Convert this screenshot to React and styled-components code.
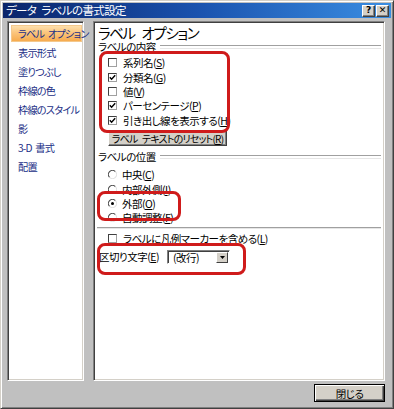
import React from "react";
import styled, { createGlobalStyle } from "styled-components";

const Global = createGlobalStyle`
  html, body { margin: 0; padding: 0; background: #c0c0c0; }
  body {
    font-family: "Noto Sans CJK JP", "Noto Sans", sans-serif;
    font-feature-settings: "palt";
  }
  * { box-sizing: border-box; }
`;

const Window = styled.div`
  width: 394px;
  height: 409px;
  background: #c0c0c0;
  border: 1px solid;
  border-color: #d4d0c8 #404040 #404040 #d4d0c8;
  box-shadow: inset 1px 1px 0 #fff, inset -1px -1px 0 #808080;
  padding: 2px;
  display: flex;
  flex-direction: column;
`;

const TitleBar = styled.div`
  height: 15px;
  display: flex;
  align-items: center;
  gap: 1px;
  padding: 0 2px 0 3px;
  background: linear-gradient(90deg, #0a246a 0%, #1a52ae 50%, #3a8ee2 100%);
`;

const Title = styled.div`
  flex: 1;
  color: #fff;
  font-size: 11.5px;
  line-height: 15px;
  white-space: nowrap;
  letter-spacing: -0.6px;
  word-spacing: 3px;
`;

const TitleButton = styled.div`
  width: 13px;
  height: 12px;
  background: #d4d0c8;
  border: 1px solid;
  border-color: #fff #404040 #404040 #fff;
  box-shadow: inset -1px -1px 0 #808080;
  display: flex;
  align-items: center;
  justify-content: center;
  font-family: "DejaVu Sans", sans-serif;
  font-weight: bold;
  font-size: 9px;
  line-height: 1;
  color: #000;
`;

const Body = styled.div`
  flex: 1;
  display: flex;
  flex-direction: column;
  padding: 3px 6px 4px 4px;
`;

const Panels = styled.div`
  height: 360px;
  display: flex;
  gap: 9px;
`;

const Sunken = styled.div`
  background: #fff;
  border: 1px solid;
  border-color: #808080 #ffffff #ffffff #808080;
  box-shadow: inset 1px 1px 0 #404040, inset -1px -1px 0 #d4d0c8;
`;

const NavList = styled(Sunken)`
  width: 77px;
  flex: none;
  padding: 3px 1px 0 3px;
  display: flex;
  flex-direction: column;
  gap: 2px;
`;

const NavItem = styled.div`
  height: 17px;
  line-height: 17px;
  padding-left: 7px;
  font-size: 10.2px;
  color: #1b2f86;
  white-space: nowrap;
  letter-spacing: -0.8px;
  word-spacing: 2px;
  background: ${(p) =>
    p.$active
      ? "linear-gradient(180deg, #fde3b4 0%, #fbc57c 45%, #f6a849 100%)"
      : "transparent"};
  box-shadow: ${(p) => (p.$active ? "inset 0 0 0 1px #f4c88c" : "none")};
`;

const Content = styled(Sunken)`
  flex: 1;
  position: relative;
  padding: 4px 3px 0 4px;
  display: flex;
  flex-direction: column;
  color: #000;
  font-size: 10.5px;
  letter-spacing: -0.5px;
`;

const Heading = styled.div`
  font-size: 14.5px;
  line-height: 14px;
  height: 14px;
  letter-spacing: -1.4px;
  word-spacing: 5px;
  white-space: nowrap;
`;

const GroupHeader = styled.div`
  display: flex;
  align-items: center;
  gap: 4px;
  height: 12px;
  line-height: 12px;
  margin-top: ${(p) => p.$mt || 0}px;
  white-space: nowrap;
  &::after {
    content: "";
    flex: 1;
    height: 2px;
    border-top: 1px solid #a0a0a0;
    border-bottom: 1px solid #e6e6e6;
  }
`;

const OptionList = styled.div`
  display: flex;
  flex-direction: column;
  margin-top: ${(p) => p.$mt || 0}px;
  padding-left: ${(p) => p.$pl || 10}px;
`;

const OptionRow = styled.div`
  height: ${(p) => p.$h || 14.4}px;
  display: flex;
  align-items: center;
  gap: ${(p) => p.$gap || 6}px;
  white-space: nowrap;
`;

const Box = styled.span`
  width: 9px;
  height: 9px;
  flex: none;
  border: 1px solid;
  border-color: #404040 #a0a0a0 #a0a0a0 #404040;
  background: #fff;
  display: flex;
  align-items: center;
  justify-content: center;
`;

const U = styled.span`
  text-decoration: underline;
  text-underline-offset: 1px;
`;

const Check = ({ checked }) => (
  <Box>
    {checked && (
      <svg width="7" height="7" viewBox="0 0 7 7">
        <path d="M0.8 3.2 L2.6 5.2 L6.2 1.2" fill="none" stroke="#000" strokeWidth="1.4" />
      </svg>
    )}
  </Box>
);

const RadioMark = ({ checked }) => (
  <svg width="9" height="9" viewBox="0 0 9 9" style={{ flex: "none" }}>
    <path d="M1.6 7.4 A4 4 0 0 1 7.4 1.6" fill="none" stroke="#4a4a4a" strokeWidth="1.1" />
    <path d="M7.4 1.6 A4 4 0 0 1 1.6 7.4" fill="none" stroke="#e2e2e2" strokeWidth="1.1" />
    {checked && <circle cx="4.5" cy="4.5" r="1.5" fill="#000" />}
  </svg>
);

const PushButton = styled.div`
  height: 16px;
  width: 119px;
  margin: 3px 0 0 10px;
  background: #d4d0c8;
  border: 1px solid;
  border-color: #fff #404040 #404040 #fff;
  box-shadow: inset -1px -1px 0 #808080;
  display: flex;
  align-items: center;
  justify-content: center;
  white-space: nowrap;
  font-size: 10px;
  letter-spacing: -0.8px;
  word-spacing: 3px;
`;

const Separator = styled.div`
  height: 2px;
  margin: 2px 0 0 -1px;
  border-top: 1px solid #a0a0a0;
  border-bottom: 1px solid #e6e6e6;
`;

const FieldRow = styled.div`
  height: 14px;
  margin-top: 3.8px;
  padding-left: 1px;
  display: flex;
  align-items: center;
  white-space: nowrap;
`;

const FieldLabel = styled.span`
  width: 68px;
  flex: none;
`;

const Select = styled.div`
  width: 63px;
  height: 14px;
  display: flex;
  align-items: center;
  border: 1px solid;
  border-color: #808080 #fff #fff #808080;
  box-shadow: inset 1px 1px 0 #404040;
  background: #fff;
  padding: 1px 1px 0 5px;
`;

const SelectText = styled.span`
  flex: 1;
  line-height: 11px;
`;

const ArrowButton = styled.span`
  width: 12px;
  height: 11px;
  background: #d4d0c8;
  border: 1px solid;
  border-color: #fff #404040 #404040 #fff;
  display: flex;
  align-items: center;
  justify-content: center;
`;

const Highlight = styled.div`
  position: absolute;
  left: ${(p) => p.$x}px;
  top: ${(p) => p.$y}px;
  width: ${(p) => p.$w}px;
  height: ${(p) => p.$h}px;
  border: 3px solid #cf1b1b;
  border-radius: 8px;
  pointer-events: none;
`;

const Footer = styled.div`
  margin-top: 3px;
  display: flex;
  justify-content: flex-end;
`;

const CloseButton = styled.div`
  width: 71px;
  height: 18px;
  border: 1px solid #000;
  background: #d4d0c8;
  box-shadow: inset 1px 1px 0 #fff, inset -1px -1px 0 #404040, inset -2px -2px 0 #808080;
  display: flex;
  align-items: center;
  justify-content: center;
  font-size: 10.5px;
  letter-spacing: -0.5px;
  color: #000;
`;

const navItems = [
  "ラベル オプション",
  "表示形式",
  "塗りつぶし",
  "枠線の色",
  "枠線のスタイル",
  "影",
  "3-D 書式",
  "配置",
];

const checks = [
  { label: "系列名", key: "S", checked: false },
  { label: "分類名", key: "G", checked: true },
  { label: "値", key: "V", checked: false },
  { label: "パーセンテージ", key: "P", checked: true },
  { label: "引き出し線を表示する", key: "H", checked: true },
];

const radios = [
  { label: "中央", key: "C", checked: false },
  { label: "内部外側", key: "I", checked: false },
  { label: "外部", key: "O", checked: true },
  { label: "自動調整", key: "F", checked: false },
];

const Accel = ({ label, k }) => (
  <span>
    {label}(<U>{k}</U>)
  </span>
);

export default function App() {
  return (
    <>
      <Global />
      <Window>
        <TitleBar>
          <Title>データ ラベルの書式設定</Title>
          <TitleButton>?</TitleButton>
          <TitleButton>✕</TitleButton>
        </TitleBar>
        <Body>
          <Panels>
            <NavList>
              {navItems.map((item, i) => (
                <NavItem key={item} $active={i === 0}>
                  {item}
                </NavItem>
              ))}
            </NavList>
            <Content>
              <Heading>ラベル オプション</Heading>
              <GroupHeader $mt={1}>ラベルの内容</GroupHeader>
              <OptionList $mt={2.5}>
                {checks.map((c) => (
                  <OptionRow key={c.key}>
                    <Check checked={c.checked} />
                    <Accel label={c.label} k={c.key} />
                  </OptionRow>
                ))}
              </OptionList>
              <PushButton>
                <Accel label="ラベル テキストのリセット" k="R" />
              </PushButton>
              <GroupHeader $mt={4.8}>ラベルの位置</GroupHeader>
              <OptionList $mt={4.6} $pl={10}>
                {radios.map((r) => (
                  <OptionRow key={r.key} $h={14.2} $gap={5}>
                    <RadioMark checked={r.checked} />
                    <Accel label={r.label} k={r.key} />
                  </OptionRow>
                ))}
              </OptionList>
              <Separator />
              <OptionList $mt={3.1}>
                <OptionRow>
                  <Check checked={false} />
                  <Accel label="ラベルに凡例マーカーを含める" k="L" />
                </OptionRow>
              </OptionList>
              <FieldRow>
                <FieldLabel>
                  <Accel label="区切り文字" k="E" />
                </FieldLabel>
                <Select>
                  <SelectText>(改行)</SelectText>
                  <ArrowButton>
                    <svg width="5" height="3" viewBox="0 0 5 3">
                      <path d="M0 0 H5 L2.5 3 Z" fill="#000" />
                    </svg>
                  </ArrowButton>
                </Select>
              </FieldRow>
              <Highlight $x={5} $y={29} $w={131} $h={82} />
              <Highlight $x={3} $y={169} $w={84} $h={30} />
              <Highlight $x={3} $y={221} $w={149} $h={32} />
            </Content>
          </Panels>
          <Footer>
            <CloseButton>閉じる</CloseButton>
          </Footer>
        </Body>
      </Window>
    </>
  );
}
